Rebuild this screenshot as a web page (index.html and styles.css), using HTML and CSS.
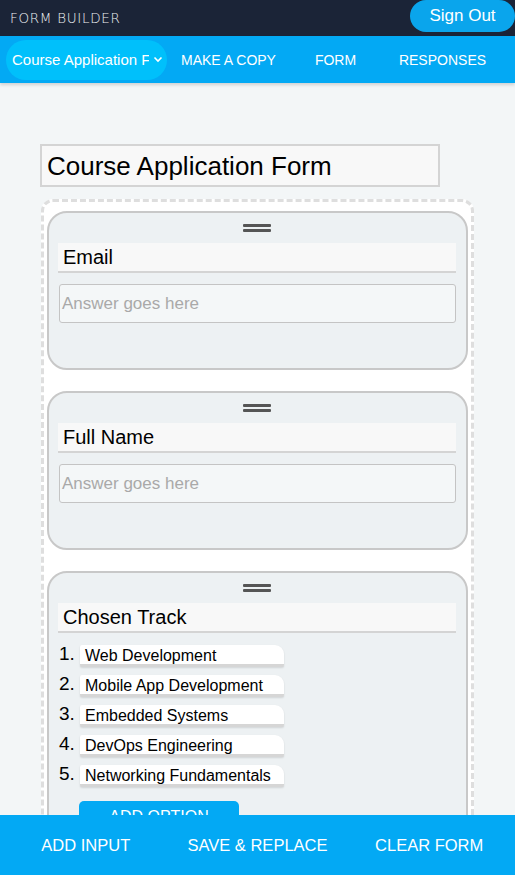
FILE: index.html
```html
<!DOCTYPE html>
<html>
<head>
<meta charset="utf-8">
<link rel="stylesheet" href="styles.css">
</head>
<body>
<header class="topbar">
  <div class="logo">FORM BUILDER</div>
  <button class="signout">Sign Out</button>
</header>
<nav class="navbar">
  <div class="form-select">
    <span class="form-select-text">Course Application Form</span>
    <svg class="chev" width="10" height="7" viewBox="0 0 10 7"><path d="M1.5 1.5 L5 5 L8.5 1.5" fill="none" stroke="#fff" stroke-width="1.6"/></svg>
  </div>
  <a class="nav-link">MAKE A COPY</a>
  <a class="nav-link">FORM</a>
  <a class="nav-link">RESPONSES</a>
</nav>
<main class="main">
  <div class="title-input">Course Application Form</div>
  <div class="dropzone">
    <section class="card">
      <div class="handle"><span></span><span></span></div>
      <div class="label">Email</div>
      <div class="answer">Answer goes here</div>
    </section>
    <section class="card">
      <div class="handle"><span></span><span></span></div>
      <div class="label">Full Name</div>
      <div class="answer">Answer goes here</div>
    </section>
    <section class="card card-options">
      <div class="handle"><span></span><span></span></div>
      <div class="label">Chosen Track</div>
      <ol class="options">
        <li class="option"><span class="num">1.</span><span class="pill">Web Development</span></li>
        <li class="option"><span class="num">2.</span><span class="pill">Mobile App Development</span></li>
        <li class="option"><span class="num">3.</span><span class="pill">Embedded Systems</span></li>
        <li class="option"><span class="num">4.</span><span class="pill">DevOps Engineering</span></li>
        <li class="option"><span class="num">5.</span><span class="pill">Networking Fundamentals</span></li>
      </ol>
      <button class="add-option">ADD OPTION</button>
    </section>
  </div>
</main>
<footer class="bottombar">
  <button class="bottom-btn">ADD INPUT</button>
  <button class="bottom-btn">SAVE &amp; REPLACE</button>
  <button class="bottom-btn">CLEAR FORM</button>
</footer>
</body>
</html>
```
FILE: styles.css
```css
* { box-sizing: border-box; }
html, body { margin: 0; padding: 0; }
body {
  font-family: "Liberation Sans", Arial, sans-serif;
  background: #f3f6f7;
  color: #000;
  overflow: hidden;
  height: 875px;
}
button { font-family: inherit; border: none; cursor: pointer; }

.topbar {
  height: 36px;
  background: #1b2437;
  display: flex;
  align-items: flex-start;
  justify-content: space-between;
}
.logo {
  font-family: "DejaVu Sans", sans-serif;
  font-weight: 200;
  font-size: 13.5px;
  letter-spacing: 0.7px;
  color: #eef0f3;
  padding: 10px 0 0 10px;
  line-height: 16px;
}
.signout {
  width: 105px;
  height: 32px;
  background: #0aa5ec;
  color: #fff;
  font-size: 17px;
  border-radius: 16px;
  padding: 0;
  text-align: center;
}

.navbar {
  height: 47px;
  background: #03a9f4;
  display: flex;
  align-items: center;
  padding-left: 6px;
  box-shadow: 0 2px 3px rgba(0,0,0,0.15);
  position: relative;
  z-index: 1;
}
.form-select {
  width: 161px;
  height: 40px;
  background: #00c0fb;
  border-radius: 20px;
  display: flex;
  align-items: center;
  padding-left: 6px;
  margin-right: 8px;
}
.form-select-text {
  color: #fff;
  font-size: 15px;
  white-space: nowrap;
  overflow: hidden;
  width: 137px;
}
.chev { margin-left: 4px; }
.nav-link {
  width: 107px;
  text-align: center;
  color: #fff;
  font-size: 14px;
}

.main {
  padding: 61px 41px 0 40px;
}
.title-input {
  width: 400px;
  height: 43px;
  background: #f8f8f8;
  border: 2px solid #d4d4d4;
  font-size: 26px;
  padding: 5px 0 0 5px;
  line-height: 30px;
}
.dropzone {
  margin-top: 12px;
  margin-left: 1px;
  background: #fff;
  border: 3px dashed #dedede;
  border-radius: 12px;
  padding: 9px 3px 40px;
  display: flex;
  flex-direction: column;
  gap: 21px;
}
.card {
  background: #edf1f3;
  border: 2px solid #c8c8c8;
  border-radius: 20px;
  padding: 11px 10px 45px 9px;
}
.handle {
  display: flex;
  flex-direction: column;
  align-items: center;
  gap: 2px;
  height: 8px;
}
.handle span {
  display: block;
  width: 28px;
  height: 3px;
  background: #555;
  border-radius: 1px;
}
.label {
  margin-top: 11px;
  height: 30px;
  background: #f8f8f8;
  border-bottom: 2px solid #d4d4d4;
  font-size: 20px;
  line-height: 28px;
  padding-left: 5px;
}
.answer {
  margin-top: 11px;
  margin-left: 1px;
  height: 39px;
  background: #f4f7f8;
  border: 1px solid #c4c4c4;
  border-radius: 3px;
  font-size: 17px;
  color: #a9a9a9;
  line-height: 37px;
  padding-left: 2px;
}
.options {
  list-style: none;
  margin: 12px 0 0;
  padding: 0;
  display: flex;
  flex-direction: column;
  gap: 8px;
}
.option {
  display: flex;
  align-items: flex-start;
  height: 22px;
}
.num {
  width: 22px;
  font-size: 19px;
  line-height: 20px;
  margin-top: -1px;
  padding-left: 1px;
}
.pill {
  width: 204px;
  height: 22px;
  background: #fff;
  border-radius: 2px 9px 2px 2px;
  border-bottom: 3px solid #d6d6d6;
  box-shadow: 0 1px 2px rgba(0,0,0,0.12);
  font-size: 16px;
  line-height: 21px;
  padding-left: 5px;
  white-space: nowrap;
}
.add-option {
  margin: 14px 0 0 21px;
  width: 160px;
  height: 30px;
  background: #03a9f4;
  color: #fff;
  font-size: 16px;
  border-radius: 5px 5px 0 0;
  padding: 2px 0 0;
  text-align: center;
  display: block;
}

.bottombar {
  position: fixed;
  left: 0;
  right: 0;
  bottom: 0;
  height: 60px;
  background: #03a9f4;
  display: grid;
  grid-template-columns: 1fr 1fr 1fr;
  align-items: center;
  z-index: 2;
}
.bottom-btn {
  background: none;
  color: #fff;
  font-size: 16.5px;
  text-align: center;
  padding: 0;
}
```
